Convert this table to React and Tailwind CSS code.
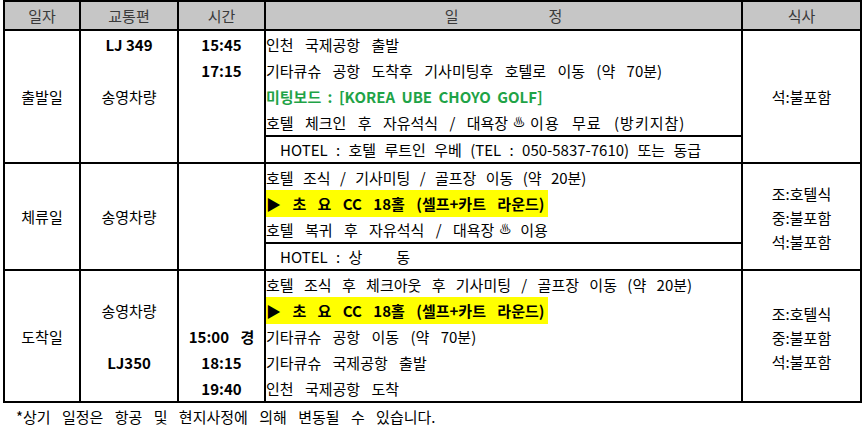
import React from "react";

const F = { fontFamily: "'Noto Sans CJK KR', 'Noto Sans', sans-serif" };

function Line({ children, className = "" }) {
  return <div className={`h-[26px] flex items-center whitespace-nowrap ${className}`}>{children}</div>;
}

function Spa() {
  return <span className="text-[12px] mx-[5px]">♨</span>;
}

export default function App() {
  return (
    <div className="w-[866px] h-[430px] bg-white text-black text-[15px] leading-none [word-spacing:8px]" style={F}>
      <div className="ml-[3px] w-[859px] border-2 border-black">
        {/* header */}
        <div className="flex h-[29px] bg-[#c6c6c6] text-[#3a3a3a] border-b-2 border-black [word-spacing:0px]">
          <div className="w-[76px] border-r-2 border-black flex items-center justify-center">일자</div>
          <div className="w-[98px] border-r-2 border-black flex items-center justify-center">교통편</div>
          <div className="w-[87px] border-r-2 border-black flex items-center justify-center">시간</div>
          <div className="w-[477px] border-r-2 border-black flex items-center justify-center gap-[90px]"><span>일</span><span>정</span></div>
          <div className="w-[117px] flex items-center justify-center">식사</div>
        </div>

        {/* day 1 */}
        <div className="flex h-[133px] border-b-2 border-black">
          <div className="w-[76px] border-r-2 border-black flex items-center justify-center">출발일</div>
          <div className="w-[98px] border-r-2 border-black flex flex-col items-center">
            <Line className="font-bold [word-spacing:0px]">LJ 349</Line>
            <Line />
            <Line>송영차량</Line>
          </div>
          <div className="w-[87px] border-r-2 border-black flex flex-col items-center font-bold">
            <Line>15:45</Line>
            <Line>17:15</Line>
          </div>
          <div className="w-[477px] border-r-2 border-black flex flex-col">
            <Line>인천 국제공항 출발</Line>
            <Line>기타큐슈 공항 도착후 기사미팅후 호텔로 이동 (약 70분)</Line>
            <Line className="text-[#1fa347] font-bold [word-spacing:3px]">미팅보드 : [KOREA UBE CHOYO GOLF]</Line>
            <Line>호텔 체크인 후 자유석식 / 대욕장<Spa /><span className="tracking-[1px]">이용 무료 (방키지참)</span></Line>
            <div className="flex-1 border-t-2 border-black flex items-center pl-[14px] whitespace-nowrap [word-spacing:5px]">
              HOTEL : 호텔 루트인 우베 (TEL : 050-5837-7610) 또는 동급
            </div>
          </div>
          <div className="w-[117px] flex items-center justify-center [word-spacing:0px]">석:불포함</div>
        </div>

        {/* day 2 */}
        <div className="flex h-[107px] border-b-2 border-black">
          <div className="w-[76px] border-r-2 border-black flex items-center justify-center">체류일</div>
          <div className="w-[98px] border-r-2 border-black flex items-center justify-center">송영차량</div>
          <div className="w-[87px] border-r-2 border-black"></div>
          <div className="w-[477px] border-r-2 border-black flex flex-col">
            <Line className="[word-spacing:6px]">호텔 조식 / 기사미팅 / 골프장 이동 (약 20분)</Line>
            <Line>
              <span className="bg-[#ffff00] h-[27px] flex items-center pr-[4px] font-bold [word-spacing:8px]">▶ 초 요 CC 18홀 (셀프+카트 라운드)</span>
            </Line>
            <Line>호텔 복귀 후 자유석식 / 대욕장<Spa /><span className="ml-[4px]">이용</span></Line>
            <div className="flex-1 border-t-2 border-black flex items-center pl-[14px] whitespace-nowrap [word-spacing:5px]">
              HOTEL : 상<span className="ml-[34px]">동</span>
            </div>
          </div>
          <div className="w-[117px] flex flex-col items-center justify-center gap-[9px] pt-[2px] [word-spacing:0px]">
            <span>조:호텔식</span>
            <span>중:불포함</span>
            <span>석:불포함</span>
          </div>
        </div>

        {/* day 3 */}
        <div className="flex h-[130px]">
          <div className="w-[76px] border-r-2 border-black flex items-center justify-center">도착일</div>
          <div className="w-[98px] border-r-2 border-black flex flex-col items-center">
            <Line />
            <Line>송영차량</Line>
            <Line />
            <Line className="font-bold">LJ350</Line>
          </div>
          <div className="w-[87px] border-r-2 border-black flex flex-col items-center font-bold">
            <Line />
            <Line />
            <Line>15:00 경</Line>
            <Line>18:15</Line>
            <Line>19:40</Line>
          </div>
          <div className="w-[477px] border-r-2 border-black flex flex-col">
            <Line className="[word-spacing:7px]">호텔 조식 후 체크아웃 후 기사미팅 / 골프장 이동 (약 20분)</Line>
            <Line>
              <span className="bg-[#ffff00] h-[27px] flex items-center pr-[4px] font-bold [word-spacing:8px]">▶ 초 요 CC 18홀 (셀프+카트 라운드)</span>
            </Line>
            <Line>기타큐슈 공항 이동 (약 70분)</Line>
            <Line>기타큐슈 국제공항 출발</Line>
            <Line>인천 국제공항 도착</Line>
          </div>
          <div className="w-[117px] flex flex-col items-center justify-center gap-[9px] pt-[2px] [word-spacing:0px]">
            <span>조:호텔식</span>
            <span>중:불포함</span>
            <span>석:불포함</span>
          </div>
        </div>
      </div>
      <div className="pl-[16px] pt-[6px] whitespace-nowrap">*상기 일정은 항공 및 현지사정에 의해 변동될 수 있습니다.</div>
    </div>
  );
}
